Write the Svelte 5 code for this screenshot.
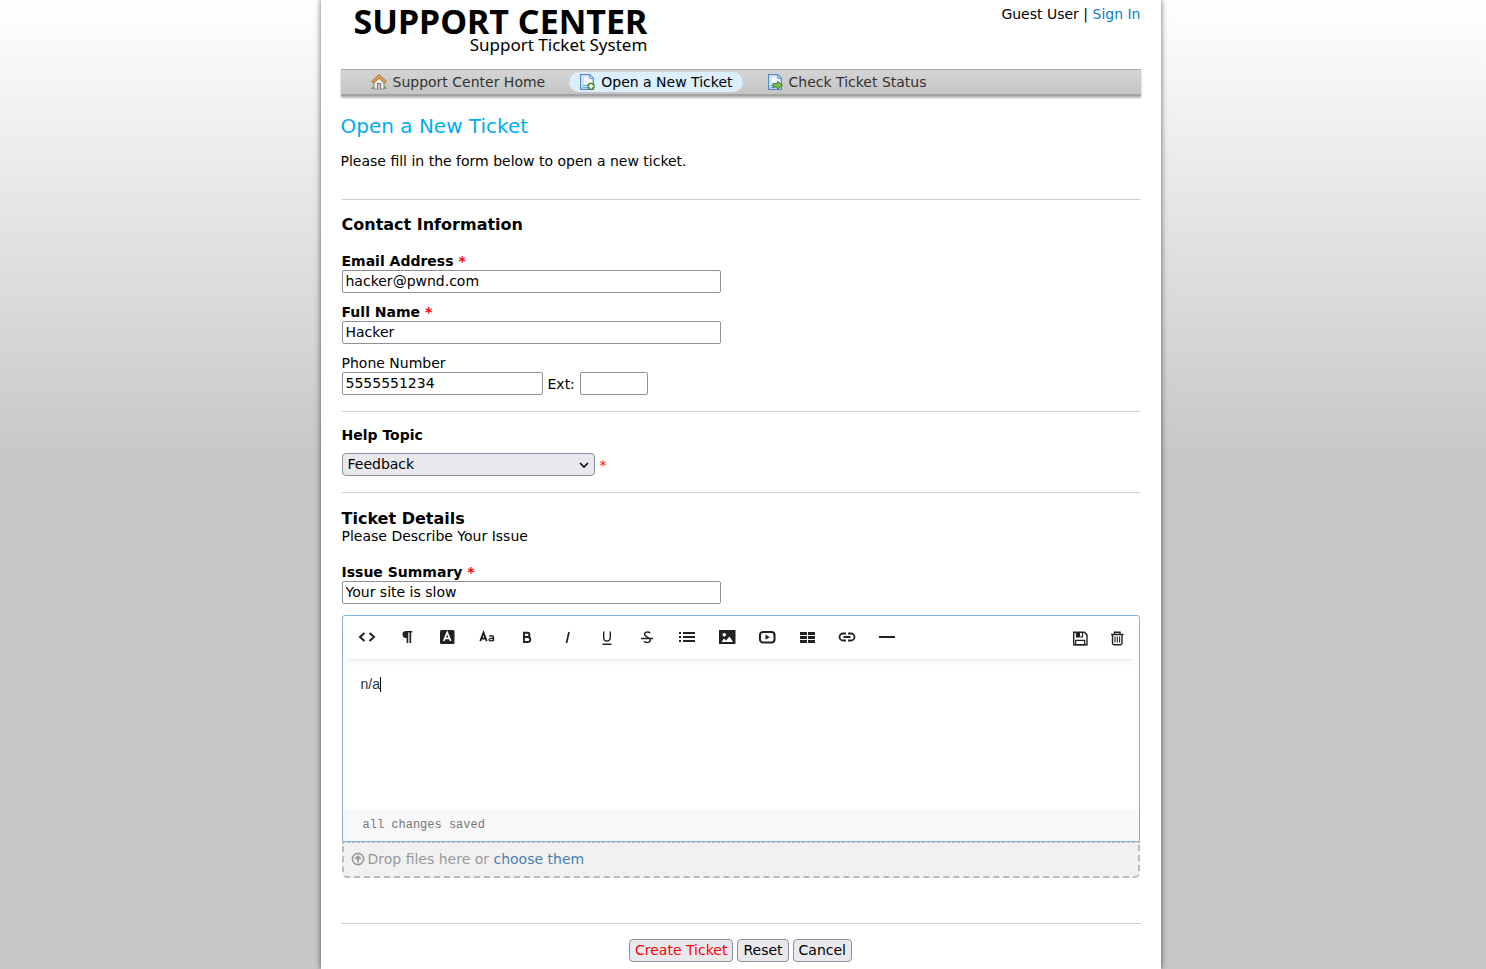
<script>
  let email = $state('hacker@pwnd.com');
  let fullName = $state('Hacker');
  let phone = $state('5555551234');
  let ext = $state('');
  let topic = $state('Feedback');
  let summary = $state('Your site is slow');
  let details = $state('n/a');

  const tools = ['code', 'paragraph', 'color', 'case', 'bold', 'italic', 'underline', 'strike', 'list', 'image', 'video', 'table', 'link', 'rule'];
</script>

{#snippet glyph(name)}
  <svg viewBox="0 0 20 20" width="20" height="20" aria-hidden="true">
    {#if name === 'code'}
      <path d="M7.500 6 3 10l4.500 4M12.500 6 17 10l-4.500 4" fill="none" stroke="currentColor" stroke-width="2" />
    {:else if name === 'paragraph'}
      <path d="M15.300 4v1.500H14.200V16h-1.700V5.500h-1.200V16H9.600v-5A3.500 3.500 0 0 1 8.500 4z" fill="currentColor" />
    {:else if name === 'color'}
      <rect x="3" y="3" width="14.500" height="14" rx="1.500" fill="currentColor" />
      <path d="m6.700 14 3.500-8.500 3.500 8.500M8 11.300h4.500" fill="none" stroke="#fff" stroke-width="1.700" />
    {:else if name === 'case'}
      <path d="m3.300 14.200 3.200-8.500 3.200 8.500M4.500 11.500h4" fill="none" stroke="currentColor" stroke-width="1.900" />
      <path d="M12.300 9.300c1.500-1 4.200-.8 4.200 1v3.900M16.500 11.300c-3-.1-4.600.4-4.400 1.600.3 1.500 3.400 1.300 4.400-.7" fill="none" stroke="currentColor" stroke-width="1.400" />
    {:else if name === 'bold'}
      <path d="M7 5.700h3.300a2.100 2.100 0 0 1 0 4.300H7zm0 4.300h3.800a2.500 2.500 0 0 1 0 5H7z" fill="none" stroke="currentColor" stroke-width="1.900" />
    {:else if name === 'italic'}
      <path d="m12 5-2.500 11" fill="none" stroke="currentColor" stroke-width="1.700" />
    {:else if name === 'underline'}
      <path d="M6.700 4.500v6.200c0 4.400 6.600 4.400 6.600 0V4.500M5.500 17.300h9" fill="none" stroke="currentColor" stroke-width="1.400" />
    {:else if name === 'strike'}
      <path d="M13.200 6.100C11.500 4.400 7.500 4.700 7.500 7.300c0 3.200 5.800 2.400 5.800 5.600 0 3-4.500 3.200-6.400 1.400M4 11.500h12" fill="none" stroke="currentColor" stroke-width="1.400" />
    {:else if name === 'list'}
      <path d="M6 6h12M6 10h12M6 14h12" stroke="currentColor" stroke-width="2" />
      <path d="M2 6h2M2 10h2M2 14h2" stroke="currentColor" stroke-width="2" />
    {:else if name === 'image'}
      <rect x="2" y="3" width="16.500" height="14" fill="currentColor" />
      <circle cx="7.300" cy="7.700" r="1.800" fill="#fff" />
      <path d="m4.500 15 2.500-3.500 2 2 3.500-4L16 15z" fill="#fff" />
    {:else if name === 'video'}
      <rect x="3" y="5" width="14.500" height="10.500" rx="3" fill="none" stroke="currentColor" stroke-width="2.100" />
      <path d="m8.500 7.600 4.300 2.600-4.300 2.600z" fill="currentColor" />
    {:else if name === 'table'}
      <path d="M3 5h7v3H3zm8 0h7v3h-7zM3 9h7v3H3zm8 0h7v3h-7zM3 13h7v3H3zm8 0h7v3h-7z" fill="currentColor" />
    {:else if name === 'link'}
      <path d="M9 6.500H6a3.500 3.500 0 0 0 0 7h3M11 6.500h3a3.500 3.500 0 0 1 0 7h-3M6.500 10h7" fill="none" stroke="currentColor" stroke-width="1.800" />
    {:else if name === 'rule'}
      <path d="M2 10h16" stroke="currentColor" stroke-width="2" />
    {:else if name === 'save'}
      <path d="M3.700 4.200h10.600l2.700 2.700v9.800H3.700z" fill="none" stroke="currentColor" stroke-width="1.400" />
      <path d="M6.500 4.500h6V9h-6zM5.700 12.300h9V17h-9z" fill="none" stroke="currentColor" stroke-width="1.200" />
      <path d="M7 4.500h3V9H7z" fill="currentColor" />
    {:else if name === 'trash'}
      <path d="M4 6.500h12.500M7.500 6V4.200H13V6M5.500 6.500v8.800q0 1.400 1.400 1.400h6.700q1.400 0 1.400-1.400V6.500" fill="none" stroke="currentColor" stroke-width="1.400" />
      <path d="M8 8.500v6M10.300 8.500v6M12.600 8.500v6" stroke="currentColor" stroke-width="1.100" />
    {/if}
  </svg>
{/snippet}

{#snippet page()}
  <path d="M1.600.6h9.200l3.600 3.600v11.200H1.600z" fill="#dcebfb" stroke="#5686c4" stroke-width="1.200" />
  <path d="M2.300 1.300h8l3.400 3.400L2.300 12z" fill="#cfe3fa" />
  <path d="M5 3h5l3 3v3L5 11z" fill="#eff6ff" />
  <path d="M10.600.8v3.600h3.600" fill="#c2dcf7" stroke="#6f9bd2" />
  <path d="M3.500 11.500h6M3.500 13.500h5" stroke="#58aee8" />
{/snippet}

<div class="page">
  <div class="container">
    <header>
      <a class="logo" href="#home">
        <strong>SUPPORT CENTER</strong>
        <span>Support Ticket System</span>
      </a>
      <p class="account">Guest User | <a href="#signin">Sign In</a></p>
    </header>

    <nav>
      <a href="#home">
        <svg viewBox="0 0 16 16" width="16" height="16" aria-hidden="true">
          <path d="M0 15q2-4 4-2h8q3-2 4 2z" fill="#5cae55" />
          <path d="M3 8v7h10V8L8 3.500z" fill="#f2eee6" stroke="#8e8b84" />
          <path d="M6 9h4v6H6z" fill="#77777a" />
          <path d="M7 10h2v5H7z" fill="#c7c9cc" />
          <path d="m1.300 8.600 6.700-6.300 6.700 6.300" fill="none" stroke="#9a6229" stroke-width="3.200" stroke-linejoin="round" />
          <path d="m1.500 8.300 6.500-6 6.500 6" fill="none" stroke="#e9a956" stroke-width="1.700" />
        </svg>
        Support Center Home
      </a>
      <a class="active" href="#new">
        <svg viewBox="0 0 16 16" width="16" height="16" aria-hidden="true">
          {@render page()}
          <circle cx="12" cy="12.300" r="3.300" fill="#69a840" stroke="#3e7a2a" />
          <path d="M12 10v4.600M9.700 12.300h4.600" stroke="#fff" stroke-width="1.500" />
        </svg>
        Open a New Ticket
      </a>
      <a href="#status">
        <svg viewBox="0 0 16 16" width="16" height="16" aria-hidden="true">
          {@render page()}
          <path d="M6 9.500h4.500V7.300l5 4-5 4v-2.300H6z" fill="#7fb94f" stroke="#437e2c" />
        </svg>
        Check Ticket Status
      </a>
    </nav>

    <main>
      <h1>Open a New Ticket</h1>
      <p class="intro">Please fill in the form below to open a new ticket.</p>

      <form onsubmit={(e) => e.preventDefault()}>
        <section class="contact">
          <h2>Contact Information</h2>
          <div class="field">
            <label class="required" for="email">Email Address <i>*</i></label>
            <input id="email" class="wide" type="text" bind:value={email} />
          </div>
          <div class="field">
            <label class="required" for="name">Full Name <i>*</i></label>
            <input id="name" class="wide" type="text" bind:value={fullName} />
          </div>
          <div class="field">
            <label for="phone">Phone Number</label>
            <div class="inline">
              <input id="phone" class="phone" type="tel" bind:value={phone} />
              <label for="ext">Ext:</label>
              <input id="ext" class="ext" type="text" bind:value={ext} />
            </div>
          </div>
        </section>

        <section class="topic">
          <label class="required" for="topic">Help Topic</label>
          <div class="inline">
            <span class="select">
              <select id="topic" bind:value={topic}>
                <option>Feedback</option>
              </select>
              <svg viewBox="0 0 10 6" width="10" height="6" aria-hidden="true">
                <path d="m1 1 4 4 4-4" fill="none" stroke="#000" stroke-width="1.600" />
              </svg>
            </span>
            <i>*</i>
          </div>
        </section>

        <section class="details">
          <h2>Ticket Details</h2>
          <p>Please Describe Your Issue</p>
          <div class="field">
            <label class="required" for="summary">Issue Summary <i>*</i></label>
            <input id="summary" class="wide" type="text" bind:value={summary} />
          </div>

          <div class="editor">
            <div class="toolbar">
              {#each tools as tool}
                <button type="button" aria-label={tool}>{@render glyph(tool)}</button>
              {/each}
              <span class="draft">
                <button type="button" aria-label="save">{@render glyph('save')}</button>
                <button type="button" aria-label="trash">{@render glyph('trash')}</button>
              </span>
            </div>
            <div class="body">
              <textarea aria-label="Issue details" bind:value={details}></textarea>
              <span class="caret"></span>
            </div>
            <div class="status">all changes saved</div>
          </div>

          <div class="dropzone">
            <svg viewBox="0 0 14 14" width="14" height="14" aria-hidden="true">
              <circle cx="7" cy="7" r="5.600" fill="none" stroke="currentColor" stroke-width="1.600" />
              <path d="M7 10.500V5M4.300 7 7 4.300 9.700 7" fill="none" stroke="currentColor" stroke-width="1.800" />
            </svg>
            <span>Drop files here or <a href="#files">choose them</a></span>
          </div>
        </section>

        <div class="actions">
          <button type="submit" class="create">Create Ticket</button>
          <button type="reset">Reset</button>
          <button type="button">Cancel</button>
        </div>
      </form>
    </main>
  </div>
</div>

<style>
  :global(body) {
    background: #c8c8c8;
  }
  .page {
    min-height: 100vh;
    box-sizing: border-box;
    padding-right: 5px;
    overflow: hidden;
    display: flex;
    justify-content: center;
    background: linear-gradient(#fff, #c8c8c8 450px);
    font: 14px/18px "DejaVu Sans", Verdana, sans-serif;
    color: #000;
  }
  .container {
    width: 100%;
    max-width: 840px;
    box-sizing: border-box;
    padding: 0 20px 7px;
    background: #fff;
    box-shadow: 0 0 6px rgba(0, 0, 0, 0.6);
  }
  h1, h2, p {
    margin: 0;
  }
  a {
    text-decoration: none;
    color: #0072bc;
  }
  i {
    font-style: normal;
    font-weight: normal;
    color: red;
  }
  .required i {
    font-weight: bold;
  }
  header {
    display: flex;
    justify-content: space-between;
    height: 69px;
  }
  .logo {
    display: flex;
    flex-direction: column;
    align-items: flex-end;
    padding: 5px 0 0 13px;
    font-family: "Noto Sans", sans-serif;
    font-size: 17px;
    line-height: 16px;
    color: #000;
  }
  .logo strong {
    font-size: 34px;
    line-height: 32px;
  }
  .account {
    padding-top: 5px;
  }
  .account a {
    color: #0f7dc2;
  }
  nav {
    display: flex;
    gap: 14px;
    height: 24px;
    align-items: center;
    padding: 0 0 2px 20px;
    border-top: 1px solid #aaa;
    background: linear-gradient(#d4d4d4, #c4c4c4);
    box-shadow: inset 0 -2px 0 #a2a2a2, 0 2px 2px rgba(0, 0, 0, 0.3);
  }
  nav a {
    display: flex;
    align-items: center;
    gap: 6px;
    height: 20px;
    padding: 0 10px;
    border-radius: 10px;
    color: #333;
  }
  nav a.active {
    background: #dbefff;
    color: #000;
  }
  h1 {
    padding-top: 18px;
    font-size: 20px;
    line-height: 24px;
    font-weight: normal;
    color: #00aeef;
  }
  .intro {
    padding: 14px 0 29px;
  }
  form {
    padding: 0 1px;
  }
  section, .actions {
    border-top: 1px solid #ccc;
  }
  h2 {
    font-size: 16px;
    line-height: 18px;
  }
  .contact {
    padding: 16px 0;
  }
  .contact h2 {
    padding-bottom: 18px;
  }
  .field {
    display: flex;
    flex-direction: column;
  }
  .field + .field {
    margin-top: 10px;
  }
  .required {
    font-weight: bold;
  }
  .inline {
    display: flex;
    align-items: center;
    gap: 5px;
  }
  input, select, .actions button {
    box-sizing: border-box;
    height: 23px;
    border: 1px solid #8f8f9d;
    border-radius: 2px;
    background: #fff;
    font: inherit;
    color: #000;
  }
  input {
    padding: 0 3px 2px;
  }
  .wide {
    width: 379px;
    max-width: 100%;
  }
  .phone {
    width: 201px;
  }
  .ext {
    width: 68px;
  }
  .topic {
    display: flex;
    flex-direction: column;
    gap: 9px;
    padding: 14px 0 16px;
  }
  .select {
    display: grid;
    align-items: center;
  }
  .select select, .select svg {
    grid-area: 1 / 1;
  }
  .select svg {
    justify-self: end;
    margin-right: 6px;
    pointer-events: none;
  }
  select {
    appearance: none;
    width: 253px;
    padding: 0 5px 2px;
    border-radius: 4px;
    background: #e9e9ed;
  }
  .details {
    padding: 17px 0 45px;
  }
  .details p {
    line-height: 17px;
  }
  .details .field {
    margin: 18px 0 11px;
  }
  .editor {
    border: 1px solid #82b2e2;
    border-radius: 3px 3px 0 0;
  }
  .toolbar {
    display: flex;
    align-items: center;
    gap: 20px;
    height: 41px;
    padding: 0 12px 2px 14px;
    box-shadow: 0 6px 6px -5px rgba(0, 0, 0, 0.12);
  }
  .toolbar button {
    display: flex;
    padding: 0;
    border: 0;
    background: none;
    color: #222;
  }
  .draft {
    display: flex;
    gap: 17px;
    margin-left: auto;
    padding-top: 2px;
  }
  .body {
    position: relative;
    height: 150px;
  }
  textarea {
    display: block;
    box-sizing: border-box;
    width: 100%;
    height: 100%;
    padding: 14px 18px;
    border: 0;
    outline: 0;
    resize: none;
    background: transparent;
    font: 14px/22px "Liberation Sans", Arial, sans-serif;
    color: #333;
  }
  .caret {
    position: absolute;
    left: 37px;
    top: 18px;
    width: 1px;
    height: 15px;
    background: #000;
  }
  .status {
    padding: 7px 20px;
    background: #f8f8f8;
    font-family: "Liberation Mono", monospace;
    font-size: 12px;
    color: #777;
  }
  .dropzone {
    display: flex;
    align-items: center;
    gap: 3px;
    padding: 7px 7px 8px;
    border: 2px dashed #bbb;
    border-top-width: 1px;
    border-radius: 0 0 5px 5px;
    background: #f1f1f1;
    color: #999;
  }
  .dropzone a {
    color: #4a80b0;
  }
  .actions {
    display: flex;
    justify-content: center;
    gap: 4px;
    padding-top: 15px;
    margin: 0 -1px;
  }
  .actions button {
    padding: 0 5px 2px;
    border-radius: 4px;
    background: #e9e9ed;
  }
  .actions .create {
    color: red;
  }
</style>
